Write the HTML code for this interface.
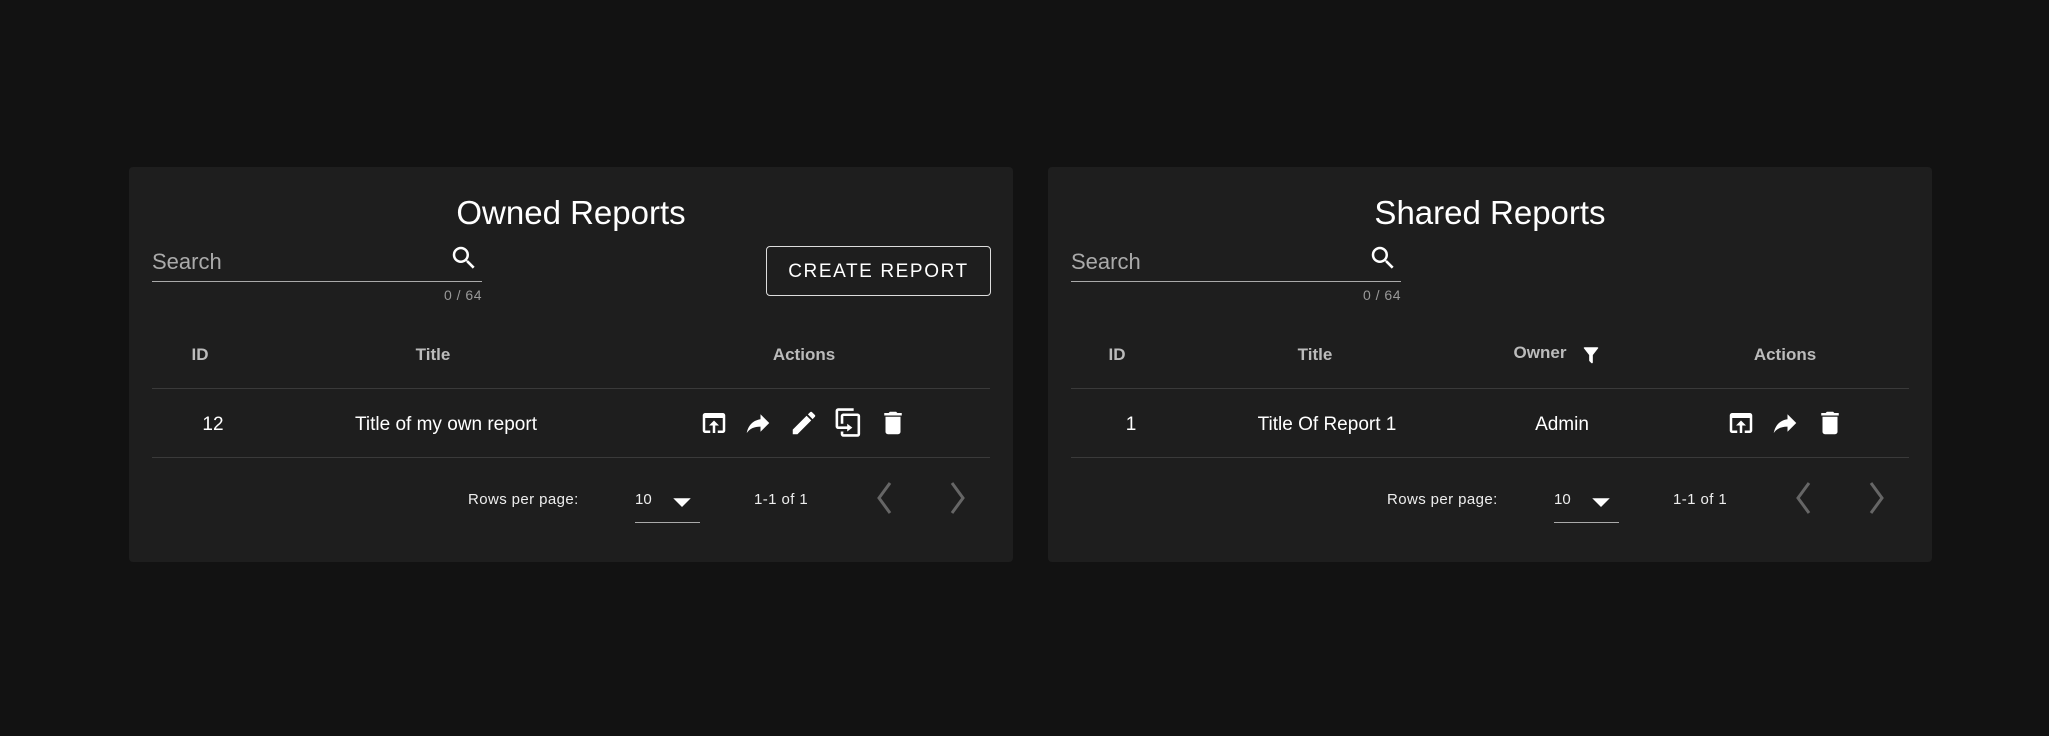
<!DOCTYPE html>
<html><head><meta charset="utf-8"><style>
*{margin:0;padding:0;box-sizing:border-box}
body{width:2049px;height:736px;background:#121212;font-family:"Liberation Sans",sans-serif;color:#fff;position:relative;overflow:hidden}
.card{position:absolute;top:167px;width:884px;height:395px;background:#1e1e1e;border-radius:4px}
.a{position:absolute;white-space:nowrap}
.c{transform:translateX(-50%)}
.t{font-size:33px;top:27px}
.s{left:23px;font-size:22px;color:#aaa}
.ul{position:absolute;height:1px;background:#aaa}
.cnt{top:120px;font-size:14px;color:#999;letter-spacing:.5px}
.h{top:178px;font-size:17px;color:#bbb;font-weight:bold}
.div{position:absolute;left:23px;right:23px;height:1px;background:#3a3a3a}
.r{top:247px;font-size:19px;color:#fff}
.p{font-size:15px;top:324px;color:#eee}
svg{position:absolute;fill:#fff}
.btn{position:absolute;left:637px;top:79px;width:225px;height:50px;border:1px solid #ddd;border-radius:4px;font-size:19px;letter-spacing:1.6px;text-align:center;line-height:50px}
.ch{fill:none;stroke:#666;stroke-width:3}
</style></head><body>

<div class="card" style="left:129px">
 <div class="a c t" style="left:442px">Owned Reports</div>
 <div class="a s" style="left:23px;top:82px">Search</div>
 <svg style="left:320px;top:76px" width="30" height="30" viewBox="0 0 24 24"><path d="M9.5,3A6.5,6.5 0 0,1 16,9.5C16,11.11 15.41,12.59 14.44,13.73L14.71,14H15.5L20.5,19L19,20.5L14,15.5V14.71L13.730,14.44C12.59,15.41 11.11,16 9.5,16A6.5,6.5 0 0,1 3,9.5A6.5,6.5 0 0,1 9.5,3M9.5,5C7,5 5,7 5,9.5C5,12 7,14 9.5,14C12,14 14,12 14,9.5C14,7 12,5 9.5,5Z"/></svg>
 <div class="ul" style="left:23px;width:330px;top:114px"></div>
 <div class="a cnt" style="right:531px">0 / 64</div>
 <div class="btn">CREATE REPORT</div>
 <div class="a c h" style="left:71px">ID</div>
 <div class="a c h" style="left:304px">Title</div>
 <div class="a c h" style="left:675px">Actions</div>
 <div class="div" style="top:221px"></div>
 <div class="a c r" style="left:84px">12</div>
 <div class="a c r" style="left:317px">Title of my own report</div>
 <svg style="left:570px;top:241px" width="30" height="30" viewBox="0 0 24 24"><path d="M19 4H5c-1.11 0-2 .9-2 2v12c0 1.1.89 2 2 2h4v-2H5V8h14v10h-4v2h4c1.1 0 2-.9 2-2V6c0-1.1-.89-2-2-2zm-7 6l-4 4h3v6h2v-6h3l-4-4z"/></svg>
 <svg style="left:614px;top:241px" width="30" height="30" viewBox="0 0 24 24"><path d="M21,12L14,5V9C7,10 4,15 3,20C5.5,16.5 9,14.9 14,14.9V19L21,12Z"/></svg>
 <svg style="left:660px;top:241px" width="30" height="30" viewBox="0 0 24 24"><path d="M20.71,7.04C21.1,6.65 21.1,6 20.71,5.63L18.37,3.29C18,2.9 17.35,2.9 16.96,3.29L15.12,5.12L18.87,8.87M3,17.25V21H6.75L17.81,9.93L14.06,6.18L3,17.25Z"/></svg>
 <svg style="left:704px;top:240px" width="31" height="31" viewBox="0 0 24 24"><path d="M11,17H4A2,2 0 0,1 2,15V3A2,2 0 0,1 4,1H16V3H4V15H11V13L15,16L11,19V17M19,21V7H8V13H6V7A2,2 0 0,1 8,5H19A2,2 0 0,1 21,7V21A2,2 0 0,1 19,23H8A2,2 0 0,1 6,21V19H8V21H19Z"/></svg>
 <svg style="left:749px;top:241px" width="30" height="30" viewBox="0 0 24 24"><path d="M19,4H15.5L14.5,3H9.5L8.5,4H5V6H19M6,19A2,2 0 0,0 8,21H16A2,2 0 0,0 18,19V7H6V19Z"/></svg>
 <div class="div" style="top:290px"></div>
 <div class="a p" style="left:339px;letter-spacing:.4px">Rows per page:</div>
 <div class="a p" style="left:506px">10</div>
 <svg style="left:538px;top:320px" width="30" height="30" viewBox="0 0 24 24"><path d="M5,9L12,16L19,9Z"/></svg>
 <div class="ul" style="left:506px;width:65px;top:355px"></div>
 <div class="a p" style="left:625px;letter-spacing:.4px">1-1 of 1</div>
 <svg style="left:746px;top:314px" width="18" height="34" viewBox="0 0 18 34"><path class="ch" d="M15,2L4,17L15,32"/></svg>
 <svg style="left:820px;top:314px" width="18" height="34" viewBox="0 0 18 34"><path class="ch" d="M3,2L14,17L3,32"/></svg>
</div>

<div class="card" style="left:1048px">
 <div class="a c t" style="left:442px">Shared Reports</div>
 <div class="a s" style="left:23px;top:82px">Search</div>
 <svg style="left:320px;top:76px" width="30" height="30" viewBox="0 0 24 24"><path d="M9.5,3A6.5,6.5 0 0,1 16,9.5C16,11.11 15.41,12.59 14.44,13.73L14.71,14H15.5L20.5,19L19,20.5L14,15.5V14.71L13.73,14.44C12.59,15.41 11.11,16 9.5,16A6.5,6.5 0 0,1 3,9.5A6.5,6.5 0 0,1 9.5,3M9.5,5C7,5 5,7 5,9.5C5,12 7,14 9.5,14C12,14 14,12 14,9.5C14,7 12,5 9.5,5Z"/></svg>
 <div class="ul" style="left:23px;width:330px;top:114px"></div>
 <div class="a cnt" style="right:531px">0 / 64</div>
 <div class="a c h" style="left:69px">ID</div>
 <div class="a c h" style="left:267px">Title</div>
 <div class="a c h" style="left:492px;top:176px">Owner</div>
 <svg style="left:532px;top:177px" width="22" height="22" viewBox="0 0 24 24"><path d="M14,12V19.88C14.04,20.18 13.94,20.5 13.71,20.71C13.32,21.1 12.69,21.1 12.3,20.71L10.29,18.7C10.06,18.47 9.96,18.16 10,17.87V12H9.97L4.21,4.62C4,4.35 4.04,3.96 4.31,3.75C4.5,3.61 4.71,3.5 4.93,3.5H19.07C19.29,3.5 19.5,3.61 19.69,3.750C19.96,3.96 20,4.35 19.79,4.62L14.03,12H14Z"/></svg>
 <div class="a c h" style="left:737px">Actions</div>
 <div class="div" style="top:221px"></div>
 <div class="a c r" style="left:83px">1</div>
 <div class="a c r" style="left:279px">Title Of Report 1</div>
 <div class="a c r" style="left:514px">Admin</div>
 <svg style="left:678px;top:241px" width="30" height="30" viewBox="0 0 24 24"><path d="M19 4H5c-1.11 0-2 .9-2 2v12c0 1.1.89 2 2 2h4v-2H5V8h14v10h-4v2h4c1.1 0 2-.9 2-2V6c0-1.1-.89-2-2-2zm-7 6l-4 4h3v6h2v-6h3l-4-4z"/></svg>
 <svg style="left:722px;top:241px" width="30" height="30" viewBox="0 0 24 24"><path d="M21,12L14,5V9C7,10 4,15 3,20C5.5,16.5 9,14.9 14,14.9V19L21,12Z"/></svg>
 <svg style="left:767px;top:241px" width="30" height="30" viewBox="0 0 24 24"><path d="M19,4H15.5L14.5,3H9.5L8.5,4H5V6H19M6,19A2,2 0 0,0 8,21H16A2,2 0 0,0 18,19V7H6V19Z"/></svg>
 <div class="div" style="top:290px"></div>
 <div class="a p" style="left:339px;letter-spacing:.4px">Rows per page:</div>
 <div class="a p" style="left:506px">10</div>
 <svg style="left:538px;top:320px" width="30" height="30" viewBox="0 0 24 24"><path d="M5,9L12,16L19,9Z"/></svg>
 <div class="ul" style="left:506px;width:65px;top:355px"></div>
 <div class="a p" style="left:625px;letter-spacing:.4px">1-1 of 1</div>
 <svg style="left:746px;top:314px" width="18" height="34" viewBox="0 0 18 34"><path class="ch" d="M15,2L4,17L15,32"/></svg>
 <svg style="left:820px;top:314px" width="18" height="34" viewBox="0 0 18 34"><path class="ch" d="M3,2L14,17L3,32"/></svg>
</div>
</body></html>
